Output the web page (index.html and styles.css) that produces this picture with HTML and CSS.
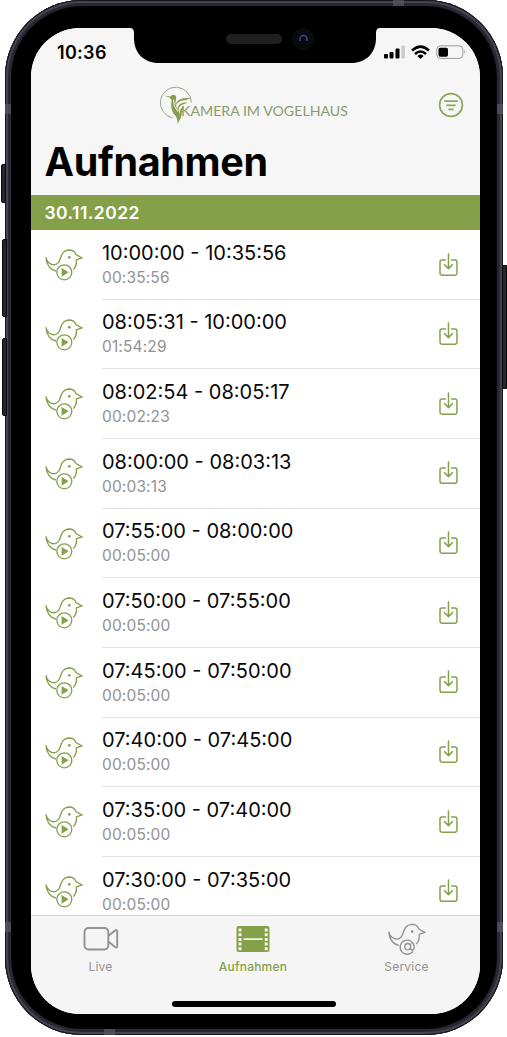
FILE: index.html
```html
<!DOCTYPE html>
<html lang="de">
<head>
<meta charset="utf-8">
<title>Aufnahmen</title>
<link rel="stylesheet" href="styles.css">
</head>
<body>
<svg class="defs" aria-hidden="true">
  <symbol id="bird" viewBox="30 38 115 100">
    <path d="M33 66C36 86 58 95 70 82C79 72 76 46 101 44C114 44 121 51 123 58L141 68L124 74C126 87 121 97 115 103M33 66C33 87 46 104 63 107"/>
    <circle class="dot" cx="103" cy="66" r="4"/>
  </symbol>
  <symbol id="play" viewBox="30 38 115 100">
    <circle cx="88" cy="111" r="22.500"/>
    <path class="dot" d="M80 98L101 111L80 124Z"/>
  </symbol>
  <symbol id="save" viewBox="58 51 58 70">
    <path d="M77 72H67Q61 72 61 78V111Q61 118 68 118H105Q112 118 112 111V78Q112 72 106 72H96M86.500 54V97M75 86L86.500 98L98 86"/>
  </symbol>
</svg>
<div class="device">
  <i class="key mute"></i><i class="key up"></i><i class="key down"></i><i class="key power"></i>
  <i class="band b1"></i><i class="band b2"></i><i class="band b3"></i><i class="band b4"></i><i class="band b5"></i><i class="band b6"></i>
  <main class="screen">
    <svg class="notch" viewBox="0 0 250 36">
      <path d="M0 0H250Q246 0 246 5V10C246 25 236 35 221 35H29C14 35 4 25 4 10V5Q4 0 0 0Z"/>
      <rect x="96" y="6" width="56" height="10" rx="5" fill="#202020"/>
      <circle cx="173" cy="11" r="11" fill="#090a0e"/>
      <path d="M170 13V11A3.500 3.500 0 0 1 177 11V13" fill="none" stroke="#354b86" stroke-width="1.500"/>
    </svg>
    <header>
      <div class="status">
        <span class="clock">10:36</span>
        <svg class="signals" viewBox="0 0 82 14">
          <rect x="0" y="9" width="4" height="4.500" rx="1"/><rect x="5.500" y="7" width="4" height="6.500" rx="1"/><rect x="11.500" y="3.500" width="4" height="10" rx="1"/><rect x="17.300" y="0.500" width="3.700" height="13" rx="1" fill="#ccc"/>
          <g fill="none" stroke="#000" stroke-width="2.500"><path d="M28 5.500Q36.500-2.300 45 5.500M31 9Q36.500 4 42 9"/></g><path d="M33.400 10.900Q36.500 8.300 39.600 10.900L36.500 14Z"/>
          <rect x="52.800" y=".8" width="26" height="12.600" rx="3.500" fill="none" stroke="#999"/><rect x="54.500" y="2.700" width="9.500" height="9" rx="1.700"/><path d="M80.400 5Q82 7 80.400 9Z" fill="#888"/>
        </svg>
      </div>
      <div class="brand">
        <svg class="logo" viewBox="0 0 106 120">
          <path d="M41 99A47 47 0 1 1 98 52" fill="none" stroke="#99a486" stroke-width="3"/>
          <path d="M16 32L34 34Q42 24 51 33Q54 43 50 50Q50 66 60 78Q67 95 57 118Q56 99 49 92Q33 77 38 45L32 37Z" fill="#849e4d"/>
          <path d="M44 44Q42 63 57 80" fill="none" stroke="#f6f6f6" stroke-width="3"/>
          <path d="M51 61Q51 37 98 38Q84 46 69 47Q58 49 51 61ZM56 72Q58 51 86 52Q79 58 70 59Q60 62 59 77ZM63 83Q63 68 76 65Q69 74 69 83Q69 99 59 110Z" fill="#849e4d"/>
        </svg>
        <span class="name">KAMERA<b>IM</b> VOGELHAUS</span>
        <svg class="filter" viewBox="0 0 26 26"><circle cx="13" cy="13" r="11.400"/><path d="M6.200 9.200H19.800M8.300 13.300H17.700M10.400 17.300H15.600"/></svg>
      </div>
      <h1>Aufnahmen</h1>
    </header>
    <h2>30.11.2022</h2>
    <section class="list">
      <article><svg class="rec"><use href="#bird"/><use href="#play"/></svg><div class="info"><p>10:00:00 - 10:35:56</p><small>00:35:56</small></div><svg class="save"><use href="#save"/></svg></article>
      <article><svg class="rec"><use href="#bird"/><use href="#play"/></svg><div class="info"><p>08:05:31 - 10:00:00</p><small>01:54:29</small></div><svg class="save"><use href="#save"/></svg></article>
      <article><svg class="rec"><use href="#bird"/><use href="#play"/></svg><div class="info"><p>08:02:54 - 08:05:17</p><small>00:02:23</small></div><svg class="save"><use href="#save"/></svg></article>
      <article><svg class="rec"><use href="#bird"/><use href="#play"/></svg><div class="info"><p>08:00:00 - 08:03:13</p><small>00:03:13</small></div><svg class="save"><use href="#save"/></svg></article>
      <article><svg class="rec"><use href="#bird"/><use href="#play"/></svg><div class="info"><p>07:55:00 - 08:00:00</p><small>00:05:00</small></div><svg class="save"><use href="#save"/></svg></article>
      <article><svg class="rec"><use href="#bird"/><use href="#play"/></svg><div class="info"><p>07:50:00 - 07:55:00</p><small>00:05:00</small></div><svg class="save"><use href="#save"/></svg></article>
      <article><svg class="rec"><use href="#bird"/><use href="#play"/></svg><div class="info"><p>07:45:00 - 07:50:00</p><small>00:05:00</small></div><svg class="save"><use href="#save"/></svg></article>
      <article><svg class="rec"><use href="#bird"/><use href="#play"/></svg><div class="info"><p>07:40:00 - 07:45:00</p><small>00:05:00</small></div><svg class="save"><use href="#save"/></svg></article>
      <article><svg class="rec"><use href="#bird"/><use href="#play"/></svg><div class="info"><p>07:35:00 - 07:40:00</p><small>00:05:00</small></div><svg class="save"><use href="#save"/></svg></article>
      <article><svg class="rec"><use href="#bird"/><use href="#play"/></svg><div class="info"><p>07:30:00 - 07:35:00</p><small>00:05:00</small></div><svg class="save"><use href="#save"/></svg></article>
    </section>
    <nav>
      <div class="tabs">
        <a class="tab"><svg viewBox="0 0 40 32" fill="none" stroke="#929292" stroke-width="1.900"><rect x="3.500" y="5" width="23.800" height="21.500" rx="4"/><path d="M27.300 13L34 7.600Q36.200 6.200 36.200 8.600V23Q36.200 25.400 34 24L27.300 18.500"/></svg><span>Live</span></a>
        <a class="tab active"><svg viewBox="0 0 40 32"><rect x="3.500" y="3" width="33" height="26" rx="2" fill="#84a048"/><path d="M7 5.500V28M33.200 5.500V28" stroke="#f4f6ef" stroke-width="3" stroke-dasharray="3 1.700"/><path d="M10.500 16.200H29.500" stroke="#f4f6ef" stroke-width="1.800"/></svg><span>Aufnahmen</span></a>
        <a class="tab service"><svg viewBox="27.500 40 120 96"><use href="#bird" x="30" y="38" width="115" height="100"/><circle cx="89" cy="111" r="25" fill="#f5f5f5" stroke="none"/><path d="M105 125A21 21 0 1 1 109 112Q109 121 103 121Q98 121 98 114V101M98 111A8.500 9.500 0 1 1 81 111A8.500 9.500 0 0 1 98 111"/></svg><span>Service</span></a>
      </div>
      <i class="home"></i>
    </nav>
  </main>
</div>
</body>
</html>
```

FILE: styles.css
```css
* { box-sizing: border-box; }
body { margin: 0; background: #fff; font-family: Inter, "Liberation Sans", sans-serif; overflow: hidden; }
.defs { position: absolute; width: 0; height: 0; }
.device { position: relative; width: 498px; height: 1035px; margin-left: 5px; padding: 28px 23px 21px 25.500px; border-radius: 77px; background: #000; box-shadow: inset 0 0 0 1px #15151d, inset 0 0 0 3px #454552, inset 0 0 0 6px #292832, inset 0 0 2px 7px #08080b; }
.screen { position: relative; display: flex; flex-direction: column; height: 986px; border-radius: 49px; background: #fff; overflow: hidden; }
.key { position: absolute; width: 5px; background: #262630; border: 1px solid #08080c; border-radius: 2px 0 0 2px; }
.mute { left: -4px; top: 164px; height: 39px; }
.up { left: -3px; top: 239px; height: 78px; }
.down { left: -3px; top: 338px; height: 78px; }
.power { right: -4px; top: 265px; height: 124px; }
.band { position: absolute; background: #555461; opacity: .75; }
.b1 { left: 0; top: 104px; width: 6px; height: 10px; }
.b2 { left: 388px; top: 0; width: 11px; height: 6px; }
.b3 { right: 0; top: 104px; width: 6px; height: 10px; }
.b4 { left: 0; top: 922px; width: 6px; height: 10px; }
.b5 { right: 0; top: 922px; width: 6px; height: 10px; }
.b6 { left: 99px; bottom: 0; width: 11px; height: 6px; }
.notch { position: absolute; left: 99.500px; top: 0; width: 250px; height: 36px; z-index: 1; }
header { height: 167px; background: #f6f6f6; }
.status { display: flex; justify-content: space-between; align-items: center; padding: 14px 14px 0 26.500px; height: 48px; }
.clock { font-size: 18px; line-height: 22px; font-weight: 600; letter-spacing: .3px; position: relative; top: -6px; }
.signals { width: 82px; height: 14px; position: relative; top: -6px; }
.status { padding-top: 15px; height: 48px; align-items: flex-start; }
.clock, .signals { position: static; }
.clock { line-height: 20px; }
.signals { margin-top: 2px; }
.brand { display: flex; align-items: center; height: 58px; padding-right: 16px; }
.logo { width: 35px; height: 40px; margin-left: 128px; flex: none; }
.name { flex: none; width: 180px; margin: 11px 0 0 -12.500px; font-family: Lato, sans-serif; font-size: 14.200px; line-height: 18px; color: #8b9b6c; white-space: nowrap; }
.name b { font-weight: inherit; margin-left: 3px; }
.filter { width: 26px; height: 26px; margin: -1px 0 0 auto; fill: none; stroke: #8ca65b; stroke-width: 1.700; }
h1 { margin: 6px 0 0 14px; font-size: 39.500px; line-height: 44px; font-weight: 700; letter-spacing: -.3px; }
h2 { flex: none; height: 35px; margin: 0; padding-left: 14px; font-size: 17.500px; line-height: 35px; font-weight: 600; letter-spacing: .45px; color: #fff; background: #84a048; }
.list { height: 684.500px; overflow: hidden; }
article { display: grid; grid-template-columns: 38.300px 1fr 19.300px; height: 69.670px; padding-left: 14.500px; }
.rec { width: 38.300px; height: 33.300px; margin-top: 18px; fill: none; stroke: #84a04d; stroke-width: 4; }
.dot { fill: currentColor; stroke: none; }
.rec, .active { color: #84a048; }
.info { grid-column: 2 / 4; grid-row: 1; margin-left: 18.700px; padding-top: 9.700px; border-bottom: 1px solid #e3e3e3; }
.info p { margin: 0; font-size: 20px; line-height: 27px; color: #080808; }
.info small { display: block; font-size: 15.500px; line-height: 22.500px; letter-spacing: .15px; color: #929292; }
.save { grid-column: 3; grid-row: 1; width: 19.300px; height: 23.300px; margin: 22.500px 0 0 -22px; fill: none; stroke: #84a04d; stroke-width: 4.500; stroke-linecap: round; stroke-linejoin: round; }
nav { flex: 1; display: flex; flex-direction: column; align-items: center; background: #f5f5f5; border-top: 1px solid #d5d5d5; }
.tabs { display: grid; grid-template-columns: 140px 165px 142px; align-self: stretch; }
.tab { display: flex; flex-direction: column; align-items: center; padding-top: 7px; color: #929292; font-size: 12px; line-height: 16px; letter-spacing: .2px; }
.tab svg { width: 40px; height: 32px; margin-bottom: 4px; }
.tab.active { color: #84a048; font-weight: 500; }
.service svg { fill: none; stroke: #929292; stroke-width: 4; }
.service .dot { fill: #929292; }
.home { width: 164px; height: 6px; border-radius: 3px; margin-top: 26px; margin-right: 2px; background: #000; }
```
